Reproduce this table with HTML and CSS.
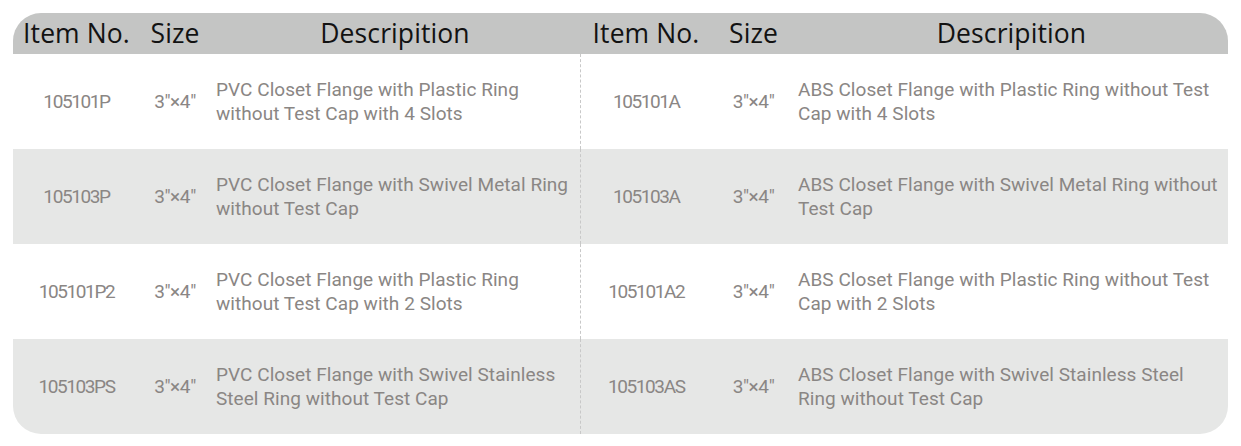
FILE: index.html
```html
<!DOCTYPE html>
<html>
<head>
<meta charset="utf-8">
<link rel="stylesheet" href="styles.css">
</head>
<body>
<div class="card">
  <table class="spec">
    <colgroup>
      <col class="c-item-l"><col class="c-size-l"><col class="c-desc-l">
      <col class="c-item-r"><col class="c-size-r"><col class="c-desc-r">
    </colgroup>
    <thead>
      <tr>
        <th>Item No.</th><th>Size</th><th>Descripition</th>
        <th>Item No.</th><th>Size</th><th>Descripition</th>
      </tr>
    </thead>
    <tbody>
      <tr>
        <td class="num">105101P</td><td class="size">3"×4"</td><td class="desc desc-l">PVC Closet Flange with Plastic Ring<br>without Test Cap with 4 Slots</td>
        <td class="num split">105101A</td><td class="size">3"×4"</td><td class="desc desc-r">ABS Closet Flange with Plastic Ring without Test<br>Cap with 4 Slots</td>
      </tr>
      <tr class="alt">
        <td class="num">105103P</td><td class="size">3"×4"</td><td class="desc desc-l">PVC Closet Flange with Swivel Metal Ring<br>without Test Cap</td>
        <td class="num split">105103A</td><td class="size">3"×4"</td><td class="desc desc-r">ABS Closet Flange with Swivel Metal Ring without<br>Test Cap</td>
      </tr>
      <tr>
        <td class="num">105101P2</td><td class="size">3"×4"</td><td class="desc desc-l">PVC Closet Flange with Plastic Ring<br>without Test Cap with 2 Slots</td>
        <td class="num split">105101A2</td><td class="size">3"×4"</td><td class="desc desc-r">ABS Closet Flange with Plastic Ring without Test<br>Cap with 2 Slots</td>
      </tr>
      <tr class="alt">
        <td class="num">105103PS</td><td class="size">3"×4"</td><td class="desc desc-l">PVC Closet Flange with Swivel Stainless<br>Steel Ring without Test Cap</td>
        <td class="num split">105103AS</td><td class="size">3"×4"</td><td class="desc desc-r">ABS Closet Flange with Swivel Stainless Steel<br>Ring without Test Cap</td>
      </tr>
    </tbody>
  </table>
</div>
</body>
</html>
```

FILE: styles.css
```css
html, body {
  margin: 0;
  padding: 0;
  background: #ffffff;
}

.card {
  margin: 13px 0 0 13px;
  width: 1215px;
  border-radius: 28px;
  overflow: hidden;
}

.spec {
  width: 1215px;
  border-collapse: collapse;
  table-layout: fixed;
}

.c-item-l { width: 127px; }
.c-size-l { width: 70px; }
.c-desc-l { width: 370px; }
.c-item-r { width: 132px; }
.c-size-r { width: 83px; }
.c-desc-r { width: 433px; }

.spec th {
  background: #c4c5c4;
  height: 41px;
  padding: 0;
  font-family: "Open Sans", "Liberation Sans", sans-serif;
  font-weight: 400;
  font-size: 26.5px;
  letter-spacing: 0.1px;
  color: #121212;
  text-align: center;
  vertical-align: top;
  line-height: 40px;
}

.spec td {
  height: 95px;
  padding: 0;
  font-family: Roboto, "Liberation Sans", sans-serif;
  font-size: 19px;
  line-height: 24px;
  color: #8a8684;
  vertical-align: middle;
}

.spec tr.alt td {
  background: #e6e7e6;
}

.num, .size {
  text-align: center;
}

.num {
  letter-spacing: -1.4px;
}

.size {
  letter-spacing: -0.4px;
}

.desc {
  text-align: left;
  letter-spacing: 0.05px;
}

.spec td.desc-l {
  padding-left: 6px;
}

.spec td.desc-r {
  padding-left: 3px;
}

.split {
  border-left: 1px dashed #c8c8c8;
}
```
